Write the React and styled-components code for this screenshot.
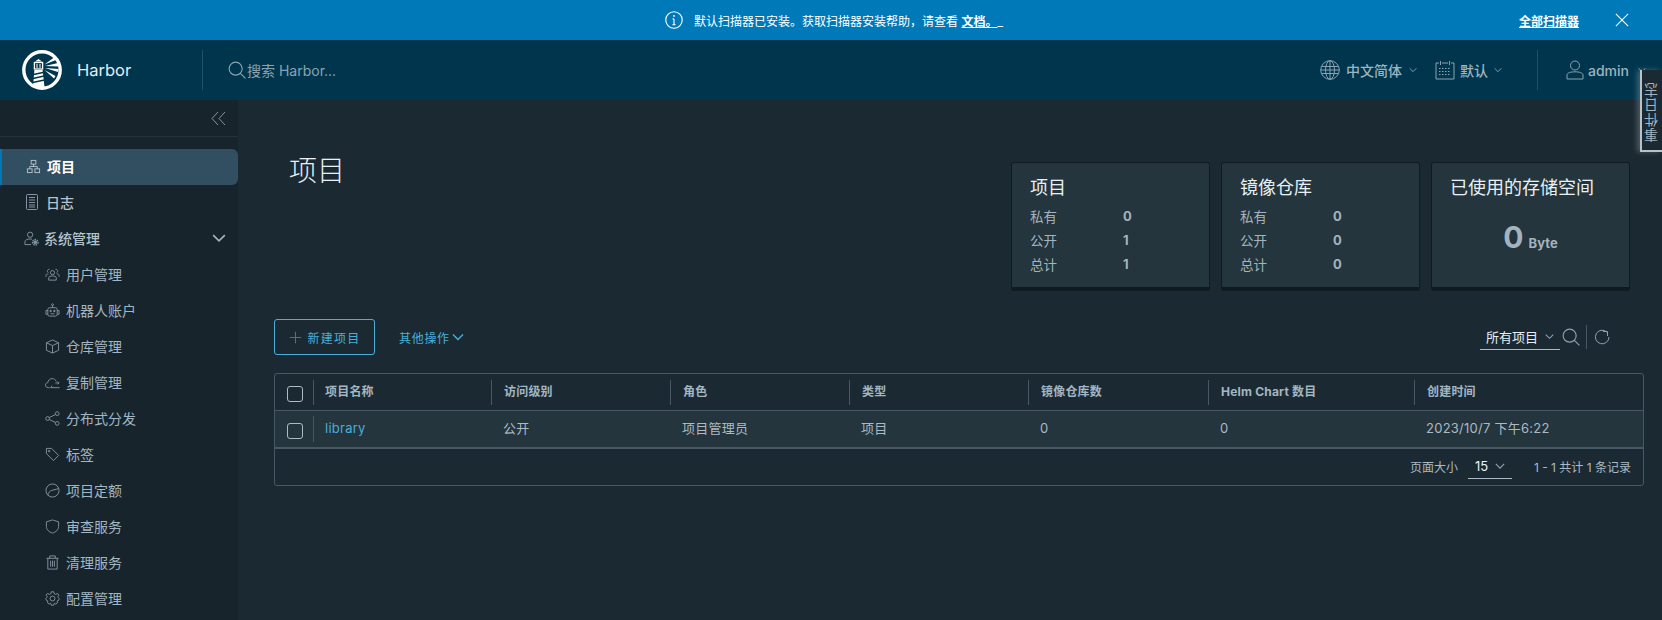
import React from "react";
import styled, { createGlobalStyle } from "styled-components";

const FONT = `Inter, "Noto Sans CJK SC", "Noto Sans", sans-serif`;

const GlobalStyle = createGlobalStyle`
  html, body {
    margin: 0;
    padding: 0;
    height: 620px;
    overflow: hidden;
    background: #1b2a32;
    font-family: ${FONT};
  }
  * {
    box-sizing: border-box;
  }
`;

const Glyph = styled.svg`
  flex: none;
  width: ${(p) => p.$size || 16}px;
  height: ${(p) => p.$size || 16}px;
  fill: none;
  stroke: ${(p) => p.$color || "#8494a0"};
  stroke-width: 1;
`;

const Icon = ({ size, color, children, box = 16 }) => (
  <Glyph viewBox={`0 0 ${box} ${box}`} $size={size} $color={color}>
    {children}
  </Glyph>
);

const Chevron = ({ size = 8, color }) => (
  <Icon size={size} color={color} box={12}>
    <path d="M1 3.5 L6 8.5 L11 3.5" strokeWidth="1.4" />
  </Icon>
);

const Logo = () => (
  <Glyph viewBox="0 0 40 40" $size={40} $color="#fff">
    <circle cx="20" cy="20" r="18.2" strokeWidth="3.4" />
    <path d="M13 11.5 L16.5 9 L20 11.5 Z" fill="#fff" stroke="none" />
    <rect x="12.4" y="12.5" width="8.2" height="6.5" strokeWidth="1.3" />
    <path d="M15 14 V18 M18 14 V18" strokeWidth="1" />
    <path d="M12.4 20 H20.6 L22.5 37 H11 Z" fill="#fff" stroke="none" />
    <path d="M11.5 24.5 L21 22.5 M11 28.5 L22 26 M10.5 32.5 L22.5 30" stroke="#00364d" strokeWidth="1.4" />
    <path d="M22.5 14.5 L32 7.5 L34 10 Z M23 16 L36 13 L36.6 16.5 Z M23 18 L36.6 19 L36 22 Z M22.5 20 L33.5 26 L32 28.5 Z" fill="#fff" stroke="none" />
  </Glyph>
);

const Page = styled.div`
  position: relative;
  width: 1662px;
  height: 620px;
  overflow: hidden;
  display: flex;
  flex-direction: column;
  color: #acbac3;
`;

const Alert = styled.div`
  flex: none;
  height: 40px;
  background: #0079b8;
  display: grid;
  grid-template-columns: 1fr auto 1fr;
  align-items: center;
  color: #fff;
  font-size: 12px;
`;

const AlertText = styled.div`
  display: flex;
  align-items: center;
  gap: 11px;
  padding-left: 6px;
  white-space: nowrap;
`;

const AlertLink = styled.span`
  font-weight: 700;
  text-decoration: underline;
`;

const AlertActions = styled.div`
  display: flex;
  justify-content: flex-end;
  align-items: center;
  gap: 36px;
  padding-right: 33px;
`;

const Header = styled.header`
  flex: none;
  height: 60px;
  background: #00364d;
  display: flex;
  align-items: center;
  padding-left: 22px;
`;

const Brand = styled.div`
  display: flex;
  align-items: center;
  gap: 15px;
  width: 180px;
  color: #e4ecf1;
  font-size: 16.5px;
`;

const HeaderDivider = styled.div`
  width: 1px;
  height: 40px;
  background: #1c5168;
`;

const Search = styled.div`
  display: flex;
  align-items: center;
  gap: 1px;
  margin-left: 25px;
  font-size: 14px;
  color: #8ba3b1;
`;

const HeaderRight = styled.div`
  margin-left: auto;
  display: flex;
  align-items: center;
  font-size: 14px;
  font-weight: 500;
  color: #9fb3bf;
`;

const HeaderMenu = styled.div`
  display: flex;
  align-items: center;
  gap: ${(p) => p.$gap || 6}px;
  margin-left: ${(p) => p.$before || 0}px;
  margin-right: ${(p) => p.$after || 0}px;
`;

const MenuChevron = styled.span`
  display: flex;
  margin-left: ${(p) => p.$left || 1}px;
`;

const Main = styled.div`
  flex: 1;
  min-height: 0;
  display: grid;
  grid-template-columns: 238px 1fr;
`;

const Sidebar = styled.nav`
  background: #17242b;
`;

const Collapse = styled.div`
  height: 37px;
  border-bottom: 1px solid #25323a;
  display: flex;
  align-items: center;
  justify-content: flex-end;
  padding-right: 12px;
  margin-bottom: 12px;
`;

const NavItem = styled.div`
  height: 36px;
  display: flex;
  align-items: center;
  gap: ${(p) => p.$gap || 6}px;
  padding-left: ${(p) => (p.$sub ? 45 : p.$active ? 26 : 24)}px;
  padding-right: 12px;
  padding-bottom: 2px;
  font-size: 14px;
  font-weight: ${(p) => (p.$active ? 700 : p.$sub ? 400 : 500)};
  color: ${(p) => (p.$active ? "#fff" : p.$sub ? "#a3b6c3" : "#b4c3cd")};
  background: ${(p) => (p.$active ? "#324f61" : "transparent")};
  border-radius: ${(p) => (p.$active ? "0 6px 6px 0" : "0")};
  box-shadow: ${(p) => (p.$active ? "inset 2px 0 0 #0079b8" : "none")};
`;

const NavArrow = styled.span`
  margin-left: auto;
  display: flex;
`;

const Content = styled.main`
  padding: 62px 18px 0 36px;
`;

const TopRow = styled.div`
  display: flex;
  justify-content: space-between;
  align-items: flex-start;
  padding-right: 14px;
`;

const Title = styled.h1`
  margin: 0 0 0 15px;
  font-size: 28px;
  font-weight: 300;
  line-height: 36px;
  color: #eaf0f3;
  transform: translateY(-9px);
`;

const Cards = styled.div`
  display: flex;
  gap: 11px;
`;

const Card = styled.section`
  width: 199px;
  height: 129px;
  background: #24353d;
  border: 1px solid #101b21;
  border-bottom-width: 4px;
  border-radius: 3px;
  padding: 12px 18px;
`;

const CardTitle = styled.div`
  font-size: 18px;
  line-height: 26px;
  color: #e9f0f4;
  margin-bottom: 3px;
  white-space: nowrap;
`;

const StatRow = styled.div`
  display: grid;
  grid-template-columns: 93px 1fr;
  height: 24px;
  align-items: center;
  font-size: 13.5px;
  color: #a3b4bf;
`;

const StatValue = styled.span`
  font-weight: 700;
  font-size: 13px;
`;

const Storage = styled.div`
  display: flex;
  justify-content: center;
  align-items: baseline;
  gap: 5px;
  margin-top: 18px;
  font-weight: 700;
  color: #a3b4bf;
`;

const StorageNumber = styled.span`
  font-size: 30px;
  line-height: 36px;
`;

const StorageUnit = styled.span`
  font-size: 13px;
`;

const Toolbar = styled.div`
  margin-top: 28px;
  height: 36px;
  display: flex;
  align-items: center;
`;

const AddButton = styled.button`
  height: 36px;
  width: 101px;
  padding: 0;
  display: flex;
  align-items: center;
  justify-content: center;
  gap: 6px;
  background: transparent;
  border: 1px solid #49afd9;
  border-radius: 3px;
  font: inherit;
  font-size: 12px;
  letter-spacing: 1.2px;
  color: #49afd9;
`;

const ActionMenu = styled.div`
  display: flex;
  align-items: center;
  gap: 2px;
  margin-left: 24px;
  font-size: 12px;
  letter-spacing: 0.7px;
  color: #49afd9;
`;

const ToolRight = styled.div`
  margin-left: auto;
  display: flex;
  align-items: center;
  padding-right: 34px;
`;

const Select = styled.div`
  width: ${(p) => p.$width}px;
  height: ${(p) => p.$height || 25}px;
  display: flex;
  align-items: center;
  justify-content: space-between;
  padding: 0 ${(p) => p.$pad || 6}px;
  border-bottom: 1px solid #acbac3;
  font-size: ${(p) => p.$font || 13}px;
  color: #e9f0f4;
`;

const ToolSearch = styled.span`
  display: flex;
  margin-left: 2px;
`;

const ToolDivider = styled.div`
  width: 1px;
  height: 24px;
  background: #485764;
  margin: 0 7px 0 6px;
`;

const Table = styled.div`
  margin-top: 18px;
  height: 113px;
  border: 1px solid #485764;
  border-radius: 3px;
`;

const Grid = styled.div`
  display: grid;
  grid-template-columns: 38px 178px 179px 179px 179px 180px 206px 1fr;
  align-items: center;
`;

const HeadRow = styled(Grid)`
  height: 37px;
  border-bottom: 1px solid #485764;
`;

const BodyRow = styled(Grid)`
  height: 38px;
  background: #24353d;
  border-bottom: 2px solid #485764;
`;

const Check = styled.span`
  display: block;
  width: 16px;
  height: 16px;
  margin: 4px 0 0 12px;
  border: 1px solid #adbbc4;
  border-radius: 3px;
`;

const HeadCell = styled.div`
  height: 25px;
  padding-left: ${(p) => (p.$first ? 11 : 12)}px;
  border-left: 1px solid #485764;
  font-size: 12px;
  font-weight: 700;
  letter-spacing: 0.2px;
  line-height: 24px;
  color: #a3b6c3;
  white-space: nowrap;
`;

const Cell = styled.div`
  padding-left: ${(p) => (p.$first ? 11 : 12)}px;
  height: 26px;
  line-height: 24px;
  font-size: 13px;
  letter-spacing: 0.25px;
  color: ${(p) => (p.$link ? "#49afd9" : "#acbac3")};
  border-left: ${(p) => (p.$first ? "1px solid #485764" : "none")};
  white-space: nowrap;
`;

const Footer = styled.div`
  height: 35px;
  display: flex;
  align-items: center;
  justify-content: flex-end;
  padding-right: 12px;
  font-size: 12px;
  color: #acbac3;
`;

const PageSize = styled.div`
  margin: 0 22px 0 10px;
`;

const SideTab = styled.div`
  position: absolute;
  right: 0;
  top: 70px;
  width: 22px;
  height: 82px;
  padding-top: 4px;
  background: #1b2a32;
  border-left: 2px solid #b9c1c6;
  border-bottom: 2px solid #b9c1c6;
  box-shadow: -3px 0 5px rgba(255, 255, 255, 0.22);
  display: flex;
  align-items: center;
  justify-content: center;
  font-size: 14px;
  letter-spacing: 1px;
  color: #a3b4bf;
  writing-mode: vertical-rl;
`;

const SideTabText = styled.span`
  transform: rotate(180deg);
  white-space: nowrap;
`;

const icons = {
  org: (
    <>
      <rect x="5.5" y="1.5" width="5" height="4" />
      <rect x="1.5" y="10.5" width="5" height="4" />
      <rect x="9.5" y="10.5" width="5" height="4" />
      <path d="M8 5.5 V8 M4 10.5 V8 H12 V10.5" />
    </>
  ),
  log: (
    <>
      <rect x="2.5" y="0.5" width="11" height="15" rx="1" />
      <path d="M5 3.5 H11 M5 6 H11 M5 8.5 H11 M5 11 H11 M5 13 H11" />
    </>
  ),
  admin: (
    <>
      <circle cx="6.5" cy="4" r="2.8" />
      <path d="M1 14.5 V11.5 C1 9.5 3.5 8.5 6.5 8.5 C7.3 8.5 8 8.6 8.6 8.7 M1 14.5 H7.5" />
      <circle cx="12" cy="12" r="1.6" fill="#8494a0" />
      <circle cx="12" cy="12" r="3" strokeDasharray="1.6 1" strokeWidth="1.4" />
    </>
  ),
  users: (
    <>
      <circle cx="8" cy="6" r="2.2" />
      <path d="M4 14 V11.5 C4 10 6 9.6 8 9.6 C10 9.6 12 10 12 11.5 V14 Z" />
      <path d="M4.8 2.4 A2 2 0 0 0 3.4 6 M1 10.5 V8.8 C1 8 2 7.4 3.6 7.4 M11.2 2.4 A2 2 0 0 1 12.6 6 M15 10.5 V8.8 C15 8 14 7.4 12.4 7.4" />
    </>
  ),
  robot: (
    <>
      <rect x="3" y="5" width="10" height="9" rx="2" />
      <circle cx="8" cy="1.8" r="1" />
      <path d="M8 2.8 V5 M3 8 H1 V12 H3 M13 8 H15 V12 H13 M6 11.5 H10" />
      <circle cx="6" cy="8.5" r="0.8" fill="#8494a0" />
      <circle cx="10" cy="8.5" r="0.8" fill="#8494a0" />
    </>
  ),
  box: (
    <>
      <path d="M8 1 L14.5 4 V12 L8 15 L1.5 12 V4 Z" />
      <path d="M1.5 4 L8 7 L14.5 4 M8 7 V15" />
    </>
  ),
  cloud: (
    <>
      <path d="M5 13.5 H3.5 C1.8 13.5 0.5 12.3 0.5 10.8 C0.5 9.3 1.6 8.2 3 8.1 C3.4 5.6 5.4 3.8 7.7 3.8 C9.6 3.8 11.2 5 12 6.8" />
      <path d="M6 13.5 H15.5 M11 8.5 H15 M15 8.5 L13.5 7 M15 8.5 L13.5 10 M7.5 11.5 L6 13.5" />
    </>
  ),
  share: (
    <>
      <circle cx="2.8" cy="8" r="2" />
      <circle cx="13" cy="2.8" r="2" />
      <circle cx="13" cy="13.2" r="2" />
      <path d="M4.6 7 L11.2 3.7 M4.6 9 L11.2 12.3" />
    </>
  ),
  tag: (
    <>
      <path d="M1.5 1.5 H7 L14.5 9 L9 14.5 L1.5 7 Z" />
      <circle cx="4.4" cy="4.4" r="0.8" />
    </>
  ),
  quota: (
    <>
      <circle cx="8" cy="8" r="7" />
      <path d="M3 13 C3.5 10.5 5 8.5 7 8 L14.5 6" />
    </>
  ),
  shield: <path d="M8 1 L14.5 3 V8 C14.5 11.5 11.5 14 8 15 C4.5 14 1.5 11.5 1.5 8 V3 Z" />,
  trash: (
    <>
      <path d="M1.5 3.5 H14.5 M5 3.5 V1 H11 V3.5 M3 3.5 V15 H13 V3.5 M6 6 V12.5 M8 6 V12.5 M10 6 V12.5" />
    </>
  ),
  gear: (
    <>
      <circle cx="8" cy="8" r="2.6" />
      <path d="M6.8 0.8 H9.2 L9.7 2.8 L11.5 3.6 L13.3 2.6 L14.9 4.4 L13.6 6 L14.2 7.1 L15.2 8 L14.6 10 L13 10.6 L13.3 12.6 L11.6 14 L10 13.1 L9.2 15.2 H6.8 L6 13.1 L4.4 14 L2.7 12.6 L3 10.6 L1.4 10 L0.8 8 L1.8 7.1 L2.4 6 L1.1 4.4 L2.7 2.6 L4.5 3.6 L6.3 2.8 Z" />
    </>
  ),
};

const subItems = [
  ["users", "用户管理"],
  ["robot", "机器人账户"],
  ["box", "仓库管理"],
  ["cloud", "复制管理"],
  ["share", "分布式分发"],
  ["tag", "标签"],
  ["quota", "项目定额"],
  ["shield", "审查服务"],
  ["trash", "清理服务"],
  ["gear", "配置管理"],
];

const stats = {
  项目: [
    ["私有", 0],
    ["公开", 1],
    ["总计", 1],
  ],
  镜像仓库: [
    ["私有", 0],
    ["公开", 0],
    ["总计", 0],
  ],
};

const columns = ["项目名称", "访问级别", "角色", "类型", "镜像仓库数", "Helm Chart 数目", "创建时间"];

const SearchIcon = ({ size = 18 }) => (
  <Icon size={size} color="#8ba3b1">
    <circle cx="6.8" cy="6.8" r="5.8" />
    <path d="M11 11 L15.5 15.5" />
  </Icon>
);

const App = () => {
  return (
    <Page>
      <GlobalStyle />
      <Alert>
        <div />
        <AlertText>
          <Icon size={18} color="#fff">
            <circle cx="8" cy="8" r="7.3" />
            <path d="M8 7 V12.2 M6.6 12.2 H9.4 M6.8 7 H8" />
            <circle cx="8" cy="4.4" r="0.8" fill="#fff" stroke="none" />
          </Icon>
          <span>
            默认扫描器已安装。获取扫描器安装帮助，请查看 <AlertLink>文档。</AlertLink>_
          </span>
        </AlertText>
        <AlertActions>
          <AlertLink>全部扫描器</AlertLink>
          <Icon size={14} color="#fff">
            <path d="M1 1 L15 15 M15 1 L1 15" strokeWidth="1.2" />
          </Icon>
        </AlertActions>
      </Alert>

      <Header>
        <Brand>
          <Logo />
          Harbor
        </Brand>
        <HeaderDivider />
        <Search>
          <SearchIcon />
          搜索 Harbor...
        </Search>
        <HeaderRight>
          <HeaderMenu $after={18}>
            <Icon size={20} color="#8ba3b1" box={20}>
              <circle cx="10" cy="10" r="9.3" />
              <ellipse cx="10" cy="10" rx="4.5" ry="9.3" />
              <path d="M10 0.7 V19.3 M1.6 6.5 H18.4 M0.7 10 H19.3 M1.6 13.5 H18.4" />
            </Icon>
            中文简体
            <MenuChevron>
              <Chevron color="#8ba3b1" />
            </MenuChevron>
          </HeaderMenu>
          <HeaderMenu $gap={5} $after={35}>
            <Icon size={20} color="#8ba3b1" box={20}>
              <path d="M4 3 H1 V19 H19 V3 H16 M7 3 H13 M5.5 1 V5 M14.5 1 V5" />
              <path d="M4 8.5 H16 M4 11.5 H16 M4 14.5 H16" strokeDasharray="1.5 1.5" strokeWidth="1.2" />
            </Icon>
            默认
            <MenuChevron>
              <Chevron color="#8ba3b1" />
            </MenuChevron>
          </HeaderMenu>
          <HeaderDivider />
          <HeaderMenu $gap={3} $before={27} $after={16}>
            <Icon size={20} color="#8ba3b1" box={20}>
              <circle cx="10" cy="5.5" r="4.5" />
              <path d="M2 19 V15 C2 12.8 6 11.8 10 11.8 C14 11.8 18 12.8 18 15 V19 Z" />
            </Icon>
            admin
            <MenuChevron $left={6}>
              <Chevron color="#8ba3b1" />
            </MenuChevron>
          </HeaderMenu>
        </HeaderRight>
      </Header>

      <Main>
        <Sidebar>
          <Collapse>
            <Icon size={15} color="#8494a0" box={15}>
              <path d="M7 1 L1 7.5 L7 14 M14 1 L8 7.5 L14 14" />
            </Icon>
          </Collapse>
          <NavItem $active>
            <Icon size={15} color="#b4c3cd">
              {icons.org}
            </Icon>
            项目
          </NavItem>
          <NavItem>
            <Icon>{icons.log}</Icon>
            日志
          </NavItem>
          <NavItem $gap={5}>
            <Icon size={15}>{icons.admin}</Icon>
            系统管理
            <NavArrow>
              <Chevron size={14} color="#a3b4bf" />
            </NavArrow>
          </NavItem>
          {subItems.map(([icon, label]) => (
            <NavItem $sub key={label}>
              <Icon size={15}>{icons[icon]}</Icon>
              {label}
            </NavItem>
          ))}
        </Sidebar>

        <Content>
          <TopRow>
            <Title>项目</Title>
            <Cards>
              {Object.entries(stats).map(([title, rows]) => (
                <Card key={title}>
                  <CardTitle>{title}</CardTitle>
                  {rows.map(([label, value]) => (
                    <StatRow key={label}>
                      {label}
                      <StatValue>{value}</StatValue>
                    </StatRow>
                  ))}
                </Card>
              ))}
              <Card>
                <CardTitle>已使用的存储空间</CardTitle>
                <Storage>
                  <StorageNumber>0</StorageNumber>
                  <StorageUnit>Byte</StorageUnit>
                </Storage>
              </Card>
            </Cards>
          </TopRow>

          <Toolbar>
            <AddButton>
              <Icon size={13} color="#2b7fa3">
                <path d="M8 1 V15 M1 8 H15" strokeWidth="1.3" />
              </Icon>
              新建项目
            </AddButton>
            <ActionMenu>
              其他操作
              <Chevron size={12} color="#49afd9" />
            </ActionMenu>
            <ToolRight>
              <Select $width={80}>
                所有项目
                <Chevron size={9} color="#8ba3b1" />
              </Select>
              <ToolSearch>
                <SearchIcon />
              </ToolSearch>
              <ToolDivider />
              <Icon size={16} color="#8ba3b1">
                <path d="M12.8 3 A6.8 6.8 0 1 0 15 8" />
                <path d="M9 2.5 L13.5 2.5 L13.5 7" />
              </Icon>
            </ToolRight>
          </Toolbar>

          <Table>
            <HeadRow>
              <Check />
              {columns.map((name, i) => (
                <HeadCell key={name} $first={i === 0}>
                  {name}
                </HeadCell>
              ))}
            </HeadRow>
            <BodyRow>
              <Check />
              <Cell $first $link>
                library
              </Cell>
              <Cell>公开</Cell>
              <Cell>项目管理员</Cell>
              <Cell>项目</Cell>
              <Cell>0</Cell>
              <Cell>0</Cell>
              <Cell>2023/10/7 下午6:22</Cell>
            </BodyRow>
            <Footer>
              页面大小
              <PageSize>
                <Select $width={44} $height={24} $pad={7} $font={13}>
                  15
                  <Chevron size={10} color="#8ba3b1" />
                </Select>
              </PageSize>
              <span>1 - 1 共计 1 条记录</span>
            </Footer>
          </Table>
        </Content>
      </Main>

      <SideTab>
        <SideTabText>事件日志</SideTabText>
      </SideTab>
    </Page>
  );
};

export default App;
